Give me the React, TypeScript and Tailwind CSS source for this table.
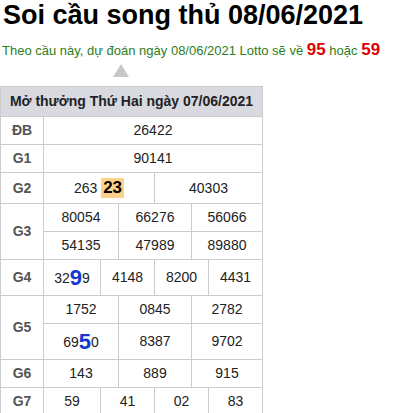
import React from 'react';

const cell = 'border border-[#cccccc] text-center py-[5px] leading-[17px] text-[14px] text-[#222]';
const label = 'border border-[#cccccc] text-center py-[5px] leading-[17px] text-[14px] font-bold text-[#555]';

const Big: React.FC<{ d: string }> = ({ d }) => (
  <span className="text-[22px] font-bold text-[#1538cf] leading-[25px] align-[-2px]">{d}</span>
);

const App: React.FC = () => {
  const trio = (vals: string[]) =>
    vals.map((v, i) => (
      <td key={i} colSpan={2} className={cell}>{v}</td>
    ));
  const quad = (vals: React.ReactNode[]) =>
    vals.map((v, i) => (
      <td key={i} colSpan={i === 0 || i === 3 ? 1 : 2} className={cell}>{v}</td>
    ));

  return (
    <div className="bg-white min-h-screen font-['Liberation_Sans',Arial,sans-serif]">
      <h1 className="text-[27px] font-bold leading-[31px] text-black pl-[3px] whitespace-nowrap">
        Soi cầu song thủ 08/06/2021
      </h1>
      <p className="mt-[9px] pl-[2px] text-[13px] text-[#2f7d22] leading-[20px] whitespace-nowrap">
        Theo cầu này, dự đoán ngày 08/06/2021 Lotto sẽ về{' '}
        <b className="text-[17px] text-[#e00000]">95</b> hoặc{' '}
        <b className="text-[17px] text-[#e00000]">59</b>
      </p>
      <div className="ml-[113px] mt-[3px] w-0 h-0 border-l-[8px] border-r-[8px] border-b-[13px] border-l-transparent border-r-transparent border-b-[#c8c8c8]" />
      <table className="mt-[9px] border-collapse table-fixed w-[263px]">
        <colgroup>
          <col className="w-[43px]" />
          <col className="w-[57px]" />
          <col className="w-[18px]" />
          <col className="w-[36px]" />
          <col className="w-[37px]" />
          <col className="w-[17px]" />
          <col className="w-[54px]" />
        </colgroup>
        <tbody>
          <tr>
            <th colSpan={7} className="border border-[#cccccc] bg-[#d9d9e0] text-[14px] font-bold text-[#222] py-[6px] leading-[17px] text-center whitespace-nowrap">
              Mở thưởng Thứ Hai ngày 07/06/2021
            </th>
          </tr>
          <tr>
            <td className={label}>ĐB</td>
            <td colSpan={6} className={cell}>26422</td>
          </tr>
          <tr>
            <td className={label}>G1</td>
            <td colSpan={6} className={cell}>90141</td>
          </tr>
          <tr>
            <td className={label}>G2</td>
            <td colSpan={3} className={cell}>
              263 <span className="bg-[#fcd28a] font-bold text-[17px] text-black px-[2px] leading-[20px] inline-block">23</span>
            </td>
            <td colSpan={3} className={cell}>40303</td>
          </tr>
          <tr>
            <td rowSpan={2} className={label}>G3</td>
            {trio(['80054', '66276', '56066'])}
          </tr>
          <tr>{trio(['54135', '47989', '89880'])}</tr>
          <tr>
            <td className={label}>G4</td>
            {quad([<>32<Big d="9" />9</>, '4148', '8200', '4431'])}
          </tr>
          <tr>
            <td rowSpan={2} className={label}>G5</td>
            {trio(['1752', '0845', '2782'])}
          </tr>
          <tr>
            <td colSpan={2} className={cell}>69<Big d="5" />0</td>
            <td colSpan={2} className={cell}>8387</td>
            <td colSpan={2} className={cell}>9702</td>
          </tr>
          <tr>
            <td className={label}>G6</td>
            {trio(['143', '889', '915'])}
          </tr>
          <tr>
            <td className={label}>G7</td>
            {quad(['59', '41', '02', '83'])}
          </tr>
        </tbody>
      </table>
    </div>
  );
};

export default App;
